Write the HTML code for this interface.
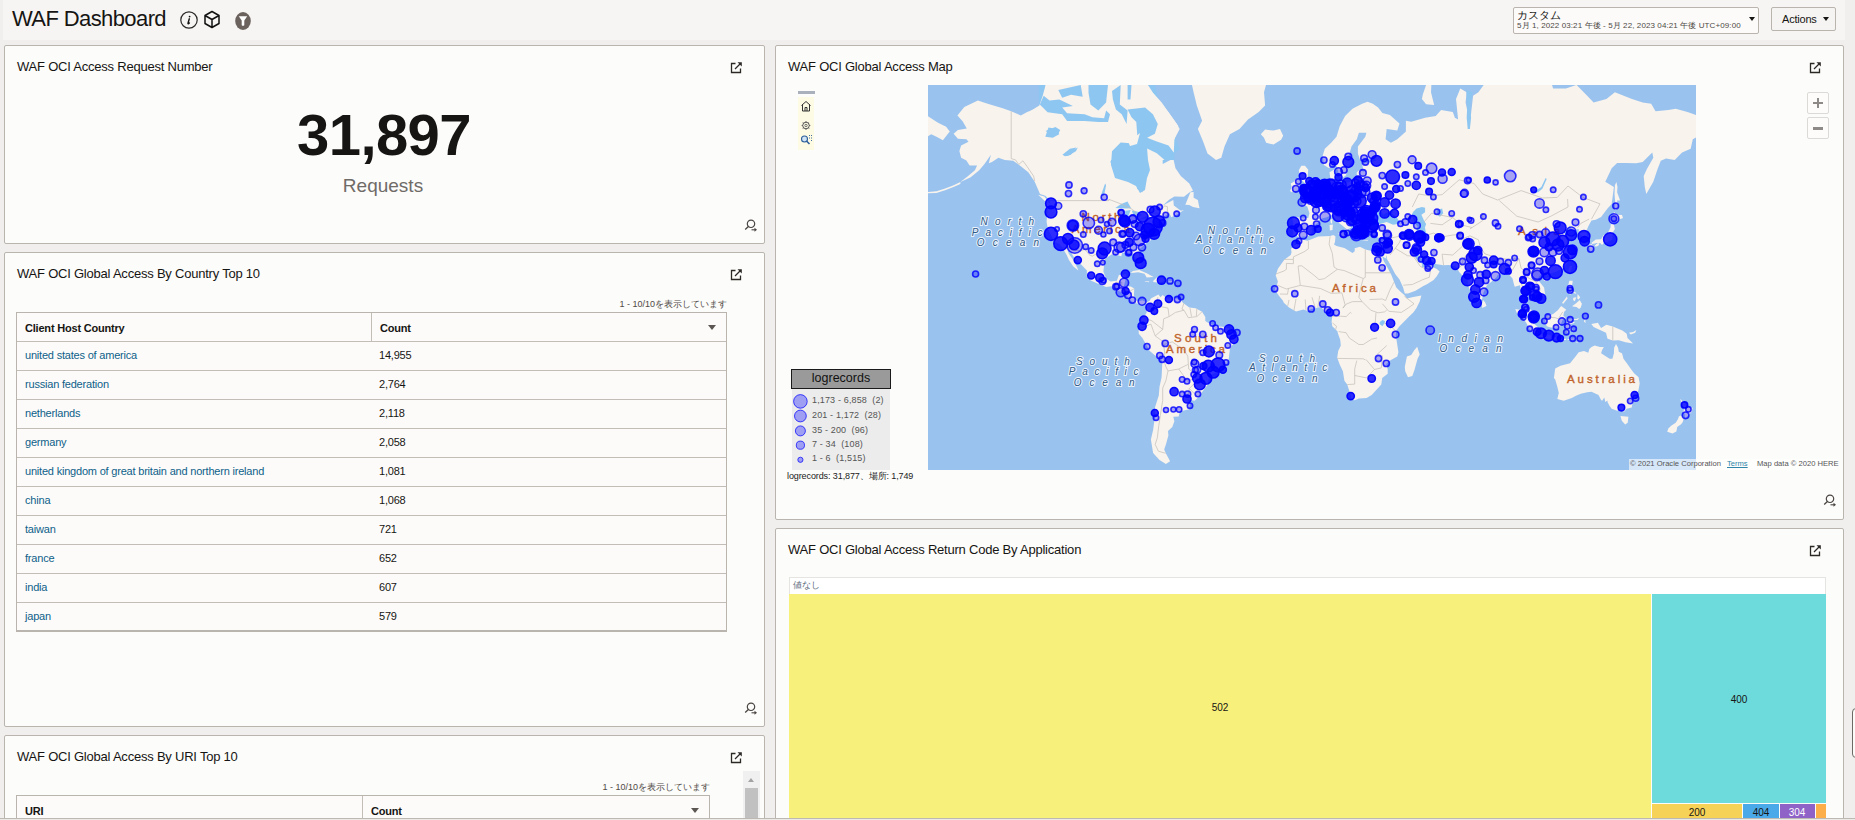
<!DOCTYPE html>
<html><head><meta charset="utf-8">
<style>
*{box-sizing:border-box;margin:0;padding:0}
html,body{width:1855px;height:820px;overflow:hidden;background:#f0efed;font-family:"Liberation Sans",sans-serif;color:#161513}
.a{position:absolute;white-space:nowrap}
.hdr{position:absolute;left:3px;top:0;width:1842px;height:40px;background:#f6f5f3}
.pnl{position:absolute;background:#fcfcfa;border:1px solid #b9b4ad;border-radius:2px}
.ttl{position:absolute;font-size:13px;letter-spacing:-0.22px;color:#161513;line-height:16px}
.ext{position:absolute;width:14px;height:14px}
.tbl{position:absolute;border:1px solid #b9b4ad;border-bottom-width:2px;background:#fcfbf9}
.row{position:absolute;left:0;right:0;height:29px;border-top:1px solid #c2bdb6}
.row span{position:absolute;top:7px;font-size:11px;letter-spacing:-0.2px;line-height:13px}
.lnk{color:#0e5f8a}
.th span{font-weight:bold;color:#161513}
.vd{position:absolute;top:0;width:1px;height:28px;background:#c2bdb6}
.tri{position:absolute;width:0;height:0;border-left:4.5px solid transparent;border-right:4.5px solid transparent;border-top:5px solid #5b5652}
</style></head><body>
<div class="hdr"></div>
<div class="a" style="left:12px;top:6px;font-size:22px;line-height:26px;letter-spacing:-0.6px;color:#161513">WAF Dashboard</div>

<svg class="a" style="left:179px;top:10px" width="20" height="20" viewBox="0 0 20 20"><circle cx="10" cy="10" r="8.2" fill="none" stroke="#2b2826" stroke-width="1.2"/><path d="M10.6 6.6v0.01" stroke="#161513" stroke-width="1.8" stroke-linecap="round"/><path d="M10.3 8.8L9 13.2Q8.8 14 9.6 13.6L10.4 13" fill="none" stroke="#161513" stroke-width="1.4" stroke-linecap="round"/></svg>
<svg class="a" style="left:203px;top:10px" width="18" height="20" viewBox="0 0 18 20"><path d="M9 1.5L16 5.5V13.5L9 17.5L2 13.5V5.5Z M2 5.5L9 9.5L16 5.5 M9 9.5V17.5" fill="none" stroke="#111" stroke-width="1.5" stroke-linejoin="round"/></svg>
<svg class="a" style="left:234px;top:11px" width="18" height="20" viewBox="0 0 18 20"><ellipse cx="9" cy="10" rx="7.8" ry="9" fill="#6b625e"/><path d="M4.8 5.2H13.2L10.3 9.5V14.2L9 15L7.7 14.2V9.5Z" fill="#fff"/></svg>
<div class="a" style="left:1513px;top:7px;width:246px;height:27px;border:1px solid #b9b4ad;border-radius:2px;background:#fcfbf9"></div>
<div class="a" style="left:1517px;top:8px;font-size:11px;line-height:14px;color:#161513">カスタム</div>
<div class="a" style="left:1517px;top:21px;font-size:8px;line-height:10px;color:#4f4a46;letter-spacing:0.1px">5月 1, 2022 03:21 午後 - 5月 22, 2023 04:21 午後 UTC+09:00</div>
<div class="a" style="left:1749px;top:17px;width:0;height:0;border-left:3.5px solid transparent;border-right:3.5px solid transparent;border-top:4.5px solid #161513"></div>
<div class="a" style="left:1771px;top:7px;width:65px;height:24px;border:1px solid #b9b4ad;border-radius:2px;background:#f5f4f2"></div>
<div class="a" style="left:1782px;top:12px;font-size:11px;line-height:14px;color:#161513;letter-spacing:-0.2px">Actions</div>
<div class="a" style="left:1823px;top:17px;width:0;height:0;border-left:3.5px solid transparent;border-right:3.5px solid transparent;border-top:4.5px solid #161513"></div>
<!-- Panel 1 -->
<div class="pnl" style="left:4px;top:45px;width:761px;height:199px"></div>
<div class="ttl" style="left:17px;top:59px">WAF OCI Access Request Number</div>
<div class="a" style="left:0;width:768px;top:100px;text-align:center;font-size:58px;font-weight:bold;line-height:70px;letter-spacing:-0.6px;color:#161513">31,897</div>
<div class="a" style="left:0;width:766px;top:174px;text-align:center;font-size:19px;line-height:24px;color:#6f6b68">Requests</div>

<!-- Panel 2 -->
<div class="pnl" style="left:4px;top:252px;width:761px;height:475px"></div>
<div class="ttl" style="left:17px;top:266px">WAF OCI Global Access By Country Top 10</div>

<div class="a" style="left:560px;width:167px;top:298px;text-align:right;font-size:9px;line-height:12px;color:#4f4a46">1 - 10/10を表示しています</div>
<div class="tbl" style="left:16px;top:312px;width:711px;height:320px">
<div class="row th" style="top:0;border-top:0;height:28px"><span style="left:8px;top:9px">Client Host Country</span><span style="left:363px;top:9px">Count</span><i class="vd" style="left:354px"></i><i class="tri" style="left:691px;top:12px"></i></div>
<div class="row" style="top:28px"><span class="lnk" style="left:8px">united states of america</span><span style="left:362px">14,955</span></div>
<div class="row" style="top:57px"><span class="lnk" style="left:8px">russian federation</span><span style="left:362px">2,764</span></div>
<div class="row" style="top:86px"><span class="lnk" style="left:8px">netherlands</span><span style="left:362px">2,118</span></div>
<div class="row" style="top:115px"><span class="lnk" style="left:8px">germany</span><span style="left:362px">2,058</span></div>
<div class="row" style="top:144px"><span class="lnk" style="left:8px">united kingdom of great britain and northern ireland</span><span style="left:362px">1,081</span></div>
<div class="row" style="top:173px"><span class="lnk" style="left:8px">china</span><span style="left:362px">1,068</span></div>
<div class="row" style="top:202px"><span class="lnk" style="left:8px">taiwan</span><span style="left:362px">721</span></div>
<div class="row" style="top:231px"><span class="lnk" style="left:8px">france</span><span style="left:362px">652</span></div>
<div class="row" style="top:260px"><span class="lnk" style="left:8px">india</span><span style="left:362px">607</span></div>
<div class="row" style="top:289px"><span class="lnk" style="left:8px">japan</span><span style="left:362px">579</span></div>
</div>
<!-- Panel 3 -->
<div class="pnl" style="left:4px;top:735px;width:761px;height:120px"></div>
<div class="ttl" style="left:17px;top:749px">WAF OCI Global Access By URI Top 10</div>
<div class="a" style="left:540px;width:170px;top:781px;text-align:right;font-size:9px;line-height:12px;color:#4f4a46">1 - 10/10を表示しています</div>
<div class="tbl" style="left:16px;top:795px;width:694px;height:40px"><div class="row th" style="top:0;border-top:0;height:28px"><span style="left:8px;top:9px">URI</span><span style="left:354px;top:9px">Count</span><i class="vd" style="left:345px"></i><i class="tri" style="left:674px;top:12px"></i></div></div>
<div class="a" style="left:743px;top:771px;width:17px;height:60px;background:#f0f0f0"></div>
<div class="a" style="left:748px;top:778px;width:0;height:0;border-left:3.5px solid transparent;border-right:3.5px solid transparent;border-bottom:4px solid #a3a3a3"></div>
<div class="a" style="left:745px;top:788px;width:13px;height:40px;background:#c1c1c1"></div>


<!-- Map panel -->
<div class="pnl" style="left:775px;top:45px;width:1069px;height:475px"></div>
<div class="ttl" style="left:788px;top:59px">WAF OCI Global Access Map</div>
<svg class="a" style="left:928px;top:85px" width="768" height="385" viewBox="0 0 768 385">
<style>.ds{fill:rgba(0,0,255,0.82);stroke:rgba(0,0,255,0.95);stroke-width:1.5}.dt{fill:rgba(0,0,255,0.33);stroke:rgba(0,0,255,0.8);stroke-width:1.6}.bl{fill:#0000ff;stroke:#0000ff;stroke-width:6;stroke-linejoin:round}
.cl{font:11.5px "Liberation Sans",sans-serif;fill:#c0622a;text-anchor:middle;stroke:#c0622a;stroke-width:0.35px}
.ol{font:italic 10px "Liberation Sans",sans-serif;fill:#2f5a88;text-anchor:middle;paint-order:stroke;stroke:#eaf2fb;stroke-width:2px}</style>
<rect width="768" height="385" fill="#99c2ef"/>
<path d="M110.9 46.6L110.9 -11.9L224.0 -11.9L230.4 14.1L243.2 41.3L251.7 63.8L221.9 91.1L217.6 112.4L179.2 112.4L179.2 46.6ZM441.6 141.3L473.6 141.3L473.6 120.5L441.6 120.5Z" fill="#8ec6f2"/>
<path d="M32.4 97.0L25.6 100.3L17.1 103.5L8.5 106.3L-1.1 107.0L-1.1 108.3L8.5 108.0L17.1 105.2L25.6 102.1L32.4 98.9ZM25.6 48.7L29.9 45.0L38.8 43.4L34.6 36.3L29.4 30.5L36.3 21.9L49.9 15.4L59.7 18.7L74.7 23.2L83.2 26.2L92.8 30.5L99.2 26.9L107.7 23.8L118.4 27.5L134.4 30.5L140.8 34.5L153.6 32.8L162.1 35.7L174.9 36.8L181.3 29.9L183.5 12.0L192.0 29.9L201.6 26.9L209.1 41.3L202.7 46.6L198.4 54.3L187.7 62.4L182.4 77.0L186.7 87.2L196.3 89.1L208.0 94.8L209.1 103.8L214.4 107.3L215.9 98.5L219.7 89.1L219.7 74.9L217.6 64.8L226.1 64.8L234.7 70.6L234.7 79.1L245.3 73.6L247.5 83.2L252.8 91.1L261.3 98.5L265.0 105.6L261.3 107.6L256.0 111.7L246.4 111.4L241.1 114.7L234.7 120.5L245.3 115.0L245.8 120.5L252.8 125.7L256.0 125.1L248.5 129.7L243.2 132.3L241.5 128.2L235.7 131.8L233.4 135.3L234.7 137.9L230.4 139.3L226.1 141.0L225.1 145.4L222.9 146.8L221.2 150.8L222.9 155.3L218.7 157.7L215.5 160.7L211.2 164.5L210.6 168.8L213.3 177.2L212.3 180.3L209.5 178.4L207.6 174.1L204.8 168.8L199.5 167.8L194.1 168.0L193.3 171.2L188.8 170.0L183.5 169.5L177.1 174.1L176.0 180.8L175.4 186.6L178.1 193.5L182.4 196.4L188.8 195.7L190.9 190.1L198.4 188.9L197.3 195.7L195.8 201.3L202.7 201.5L206.3 203.5L205.9 210.1L206.9 214.5L210.1 216.6L214.4 215.3L218.7 217.5L217.0 218.3L213.3 220.3L210.1 218.8L205.9 217.7L201.2 214.5L197.3 207.9L189.9 206.0L183.5 201.3L178.1 202.0L170.7 199.1L163.2 195.7L158.9 191.2L158.9 185.5L153.6 180.1L147.2 173.9L142.9 167.5L139.1 164.3L140.8 168.8L145.1 174.8L149.3 182.7L150.4 185.5L148.7 184.3L145.1 181.3L140.8 174.8L138.7 170.0L134.2 162.5L131.2 158.7L126.7 157.1L122.7 149.5L119.9 144.0L118.6 137.0L119.5 124.5L118.0 117.6L121.6 117.9L122.7 120.5L121.6 115.0L117.3 110.7L112.0 109.0L106.7 96.7L100.3 87.2L92.8 81.2L85.3 75.8L76.8 74.9L70.4 72.8L64.0 77.0L60.8 78.3L62.9 69.7L56.5 79.1L51.2 85.2L42.7 92.2L36.3 95.2L32.4 97.0L39.5 91.4L46.9 85.2L49.1 80.4L41.6 80.4L38.4 75.4L33.1 72.8L31.4 66.1L33.1 60.6L40.5 56.7L38.4 54.3L29.9 53.8ZM228.3 -39.5L243.2 -20.5L260.3 -16.1L265.6 7.2L268.8 20.6L274.1 35.7L269.9 44.0L275.2 56.7L279.5 68.4L288.0 74.9L293.3 72.8L296.5 61.5L301.9 49.2L311.5 44.0L320.0 34.5L330.7 26.9L337.1 20.6L336.0 7.2L341.3 -11.9L345.6 -29.6L341.3 -61.9L320.0 -105.6L266.7 -97.2L245.3 -81.8ZM246.0 67.0L243.2 61.5L245.8 55.3L251.7 44.0L248.5 38.5L241.1 28.1L234.7 20.0L226.1 12.0L215.5 4.3L204.8 -0.9L193.1 -0.1L197.3 14.1L202.7 23.8L208.0 25.6L213.3 26.9L216.5 34.5L226.1 35.7L228.3 41.3L230.4 44.0L225.1 51.8L228.3 56.7L232.5 62.4L238.9 65.2ZM131.2 14.1L139.7 1.4L155.7 -0.1L161.1 10.7L167.5 23.8L162.1 30.5L153.6 30.5L141.9 28.1L133.3 26.2L132.3 18.0ZM116.3 11.3L118.4 -3.9L136.5 -3.9L134.4 7.2L128.0 16.1L121.6 17.4ZM195.2 56.7L201.6 61.5L212.3 57.7L204.8 51.8L200.5 45.6L196.3 50.2ZM180.3 10.7L185.6 -3.9L192.0 -3.9L187.7 10.7L183.5 14.1ZM165.3 7.2L168.5 -2.4L174.9 -3.9L177.1 7.2L173.9 16.1ZM172.8 31.1L178.1 25.0L180.3 31.1L176.0 34.5ZM257.3 119.8L262.4 107.3L265.6 107.0L265.6 112.7L269.9 115.0L270.9 120.5L271.6 123.3L268.8 122.7L265.0 122.0L261.3 120.1ZM110.1 109.7L116.3 111.4L121.0 117.6L117.8 116.9L113.1 112.4ZM202.7 188.0L204.8 185.9L211.2 185.0L218.7 188.2L225.7 191.9L218.7 192.6L216.5 188.7L210.1 187.3L205.9 187.8ZM225.1 196.0L228.7 192.6L234.7 193.0L238.1 195.5L234.7 196.4L231.5 197.7L225.3 196.9ZM216.7 196.0L221.4 196.6L220.8 197.3L217.0 196.6ZM240.6 195.7L244.1 196.0L243.8 196.9L240.6 196.9ZM218.7 217.5L221.9 215.5L222.9 213.4L225.7 211.9L230.4 209.5L232.5 212.3L234.7 210.1L238.9 213.4L247.5 213.2L252.2 214.5L254.9 217.7L261.3 222.6L267.7 223.3L274.1 226.7L277.3 232.1L277.3 235.9L280.5 238.0L289.1 241.2L296.5 242.1L301.9 243.8L308.9 247.7L309.8 251.9L308.3 256.7L304.0 260.6L301.9 263.9L300.8 273.8L297.6 280.6L294.4 286.1L289.1 287.0L283.7 289.8L280.5 294.6L279.5 299.9L275.2 305.5L270.9 311.8L266.7 315.7L263.5 315.2L259.2 314.4L262.0 319.1L261.3 324.2L251.7 326.4L250.7 331.4L245.3 331.7L246.4 336.2L244.3 342.1L240.0 346.1L240.4 350.4L237.9 359.4L236.2 364.5L237.7 368.0L242.1 376.2L237.9 378.9L231.5 375.1L225.1 368.0L222.9 354.5L225.1 345.1L226.1 337.7L227.2 332.0L227.0 322.3L230.8 310.5L231.5 301.8L233.6 292.2L234.2 279.5L234.0 275.6L228.3 271.6L221.2 265.6L219.3 261.7L214.4 253.0L210.8 248.7L210.6 245.1L212.3 242.3L211.4 238.0L213.3 233.8L215.9 232.1L218.7 227.4L218.7 222.0L217.8 219.9ZM371.4 154.0L379.7 155.8L390.4 151.4L402.3 151.1L405.3 150.0L407.5 151.4L407.0 156.9L406.0 159.5L408.5 161.0L416.4 163.0L424.5 168.0L426.7 166.3L426.7 163.3L432.0 161.8L437.3 164.5L445.9 166.5L452.9 165.5L457.0 165.5L453.5 169.0L455.7 176.0L459.7 183.1L463.4 190.1L466.1 196.9L468.3 202.4L472.5 206.8L476.4 210.1L478.9 213.6L485.3 211.9L493.4 210.5L491.7 216.6L488.5 223.1L485.3 227.4L481.1 231.6L475.7 237.0L471.5 241.2L468.3 245.5L467.8 250.4L468.9 257.3L470.4 267.2L469.3 271.6L462.9 274.9L458.2 279.0L459.7 284.0L459.7 288.7L454.2 293.1L453.3 299.4L450.1 303.0L443.7 310.0L438.6 313.1L430.9 313.6L426.7 315.2L423.5 313.9L422.4 309.3L419.2 299.6L416.4 295.8L414.9 286.3L411.7 279.5L409.2 272.7L410.2 266.1L412.8 260.6L412.2 254.7L410.0 248.7L409.4 246.2L404.3 241.2L403.6 237.0L403.8 235.0L404.7 227.4L402.1 226.3L396.8 226.7L393.6 222.4L391.3 222.2L383.6 224.1L379.5 225.9L375.5 224.6L368.0 226.5L361.0 222.4L355.8 217.7L354.8 215.5L350.7 210.5L346.7 204.2L348.8 200.2L349.9 196.6L347.7 190.5L349.9 183.8L356.3 174.8L362.7 170.0L363.5 167.5L363.1 163.8L365.9 160.5L367.8 159.7L370.6 156.1ZM489.2 261.7L491.7 269.4L489.6 273.8L486.4 285.2L484.3 291.0L480.0 292.2L477.2 286.3L476.8 281.7L478.9 271.6L483.2 270.0L486.4 265.0ZM372.1 153.5L370.6 152.2L368.2 150.3L365.0 150.8L365.2 146.2L363.9 144.3L365.4 138.4L364.2 134.1L366.9 132.0L373.3 132.6L380.2 132.9L381.4 128.2L379.3 121.4L374.0 118.9L377.6 116.3L380.6 116.6L381.2 113.4L384.4 114.3L387.4 111.7L389.3 108.7L392.5 107.3L394.2 102.1L398.9 100.3L402.1 99.2L402.3 92.9L401.5 87.2L406.4 84.4L406.0 89.1L407.3 92.9L405.3 95.6L407.5 98.5L413.9 98.9L423.5 96.3L428.8 93.7L428.8 87.2L432.0 84.4L435.8 87.2L434.1 79.1L443.7 77.0L448.4 75.4L445.9 74.1L437.3 73.6L432.0 74.9L429.9 68.4L429.9 61.5L437.3 51.8L438.4 47.7L430.9 47.7L428.8 54.3L423.5 61.5L420.9 70.6L424.1 75.8L419.2 85.2L418.1 90.3L413.9 93.3L411.3 91.1L409.2 83.2L407.5 78.3L406.4 77.0L401.1 83.2L395.9 80.0L394.7 70.6L396.8 63.8L403.2 57.7L408.5 51.8L411.7 41.3L417.1 31.1L424.5 23.8L434.1 18.7L439.5 16.7L444.8 18.7L450.1 22.5L454.4 28.1L461.9 29.9L471.5 38.5L469.3 45.6L458.7 44.0L457.6 54.3L462.9 57.7L469.3 54.3L477.9 46.6L477.9 35.7L483.2 36.8L497.1 32.8L507.7 31.1L513.1 25.0L524.8 26.9L526.9 32.8L530.1 34.5L528.0 14.1L532.3 3.6L538.7 7.2L537.6 17.4L540.8 32.8L542.9 29.9L545.1 10.7L550.4 7.2L555.7 -0.1L569.6 -3.9L597.3 -29.6L622.9 -3.9L625.1 3.6L637.9 3.6L648.5 -0.1L659.2 10.7L665.6 17.4L678.4 14.1L686.9 7.2L704.0 14.1L714.7 17.4L723.2 18.7L727.5 26.2L740.3 25.0L747.7 23.8L759.5 26.9L769.1 30.5L769.1 51.8L764.8 54.3L762.7 63.8L754.1 67.5L746.7 74.9L738.1 73.6L732.8 75.8L729.6 84.0L725.3 96.7L718.3 109.0L716.8 102.1L715.7 91.1L718.9 84.0L725.3 72.8L724.3 67.5L714.7 77.0L708.3 78.3L697.6 77.9L689.1 77.9L683.7 83.2L677.3 96.7L685.9 102.1L683.7 118.9L679.5 123.6L673.1 132.0L667.7 134.7L663.5 135.6L660.3 141.3L658.1 146.8L660.1 153.5L659.2 155.6L653.9 157.4L653.9 150.8L650.7 148.7L650.7 144.0L643.2 145.4L642.1 140.4L636.8 145.4L635.1 146.8L637.9 150.3L645.3 149.8L641.1 153.5L638.5 156.6L642.1 163.8L644.1 166.5L643.2 172.4L638.9 178.4L634.7 183.6L627.6 187.1L620.8 188.9L618.7 191.2L615.5 188.5L611.2 191.2L609.7 194.6L616.1 202.4L617.2 210.1L612.3 213.4L608.0 217.1L606.9 213.4L603.7 211.2L598.4 207.0L596.3 210.1L595.6 215.5L598.4 220.9L604.6 226.3L606.3 232.9L603.7 232.7L599.5 230.1L597.8 224.1L594.1 218.8L594.1 213.4L592.6 204.6L592.0 200.2L586.7 201.8L585.6 198.0L584.5 193.5L581.3 190.1L579.8 186.6L577.1 187.8L572.8 188.2L569.6 190.1L568.5 192.3L563.2 196.9L558.9 200.2L555.3 207.9L554.2 213.8L549.3 218.6L547.2 215.5L544.0 209.0L540.8 202.4L539.3 194.6L538.9 188.9L534.4 190.5L531.2 187.1L529.7 184.3L526.9 181.3L520.5 180.1L515.2 180.3L507.7 179.1L505.6 176.0L504.1 175.6L499.2 176.8L493.9 174.1L490.7 168.8L486.4 168.8L487.5 172.9L490.7 177.2L493.9 178.4L493.9 182.0L500.3 182.7L504.1 177.7L504.5 182.0L508.8 184.1L511.6 186.6L508.8 191.2L505.6 195.1L499.4 199.1L494.9 201.3L487.5 205.7L480.0 208.4L476.8 208.6L475.1 202.4L471.5 194.6L467.2 188.9L462.9 180.8L458.7 173.6L458.7 170.0L457.6 173.6L454.4 171.2L453.3 168.8L452.9 165.5L457.6 165.0L458.7 161.3L460.4 156.1L460.8 151.4L456.5 152.7L453.3 153.2L449.1 152.2L443.7 151.6L441.6 146.8L440.5 142.6L445.9 139.8L450.1 139.6L458.7 137.0L465.1 139.8L472.5 138.4L468.7 132.3L464.0 128.8L466.1 123.6L459.7 127.3L455.5 129.7L453.3 126.7L450.1 123.3L446.9 127.6L443.5 133.5L443.7 137.0L445.7 139.6L440.5 141.0L436.3 140.1L433.1 141.5L432.0 142.6L434.1 148.1L432.0 152.2L429.9 150.8L428.8 146.8L425.4 141.3L425.6 137.6L422.4 135.3L417.1 131.2L413.2 126.7L410.2 127.3L410.7 131.2L413.9 135.6L418.6 137.3L423.5 142.4L420.3 144.0L419.2 146.8L417.5 148.1L418.6 144.0L416.0 142.1L414.3 140.4L409.6 137.0L406.0 132.6L403.2 130.0L398.9 132.3L394.7 133.2L390.4 135.6L390.8 137.6L388.7 138.7L385.1 141.3L383.4 144.0L384.4 146.2L382.5 149.2L379.7 151.6L374.6 151.6ZM-1.1 30.5L9.6 37.4L18.1 41.8L21.8 46.6L19.2 49.7L14.9 55.3L8.5 51.8L3.2 49.2L-1.1 51.8ZM371.8 112.4L377.6 110.4L387.0 108.3L387.6 103.1L384.4 100.3L381.4 96.3L379.7 91.4L380.2 84.8L377.0 80.8L373.3 80.8L370.8 85.2L372.1 93.7L374.2 95.6L377.6 98.9L374.2 101.0L374.4 104.5L372.9 106.6L377.6 107.3L374.8 109.0ZM370.8 101.0L372.1 96.7L370.1 94.1L368.0 93.7L365.9 96.7L362.7 98.5L363.7 102.1L362.0 105.9L363.7 107.3L366.5 106.3L370.3 104.9ZM332.8 49.2L337.1 44.5L345.6 45.6L352.0 44.0L355.2 50.8L353.1 54.8L345.6 59.6L338.1 57.7L336.0 52.8ZM493.9 14.1L498.1 19.3L506.2 20.0L503.0 7.2L503.5 -2.4L498.1 -0.1L494.9 9.3ZM554.2 223.1L558.5 220.9L557.2 217.5L555.1 214.9L554.0 218.8ZM663.3 157.9L667.7 154.5L673.1 154.3L675.6 150.0L679.5 148.4L682.5 142.6L682.7 139.3L685.7 138.7L686.9 144.0L684.8 147.6L684.6 151.1L684.4 154.3L682.2 156.1L681.0 155.6L680.1 156.9L676.3 157.1L674.1 160.0L672.2 157.9L668.8 157.9L664.5 158.9ZM660.9 160.0L663.5 158.9L665.6 161.3L664.5 165.3L662.6 166.3L661.5 163.3L660.5 161.3ZM666.7 160.5L669.9 157.9L671.4 158.4L670.3 160.7L667.7 161.8ZM682.7 138.4L682.7 133.2L686.1 127.0L689.1 129.7L694.0 130.0L695.0 132.9L691.2 134.4L689.5 137.0L684.8 135.6L683.7 137.9ZM686.9 125.1L690.1 123.6L689.1 115.6L692.1 115.6L689.1 107.3L689.5 102.1L688.4 97.0L686.9 100.3L686.5 109.0L687.4 118.9L686.7 123.6ZM640.2 185.5L642.1 180.8L644.1 180.8L643.2 185.5L641.7 188.0ZM615.7 194.2L619.7 192.3L620.8 193.2L618.7 196.2L615.9 195.7ZM640.0 201.3L641.3 195.7L644.7 195.7L644.3 199.1L643.2 202.4L644.3 205.7L648.5 207.9L647.5 208.8L642.1 206.2L641.1 204.6L640.0 203.5ZM644.3 220.9L647.5 218.8L651.7 214.9L653.9 218.8L652.8 222.4L651.1 223.9L648.5 222.0L644.7 221.4ZM649.6 209.0L652.2 212.3L650.7 214.5L649.2 213.4ZM645.3 212.7L648.3 212.3L646.8 216.2L645.1 214.9ZM634.0 218.1L638.9 211.6L639.6 213.4L635.3 218.8ZM640.6 206.8L643.2 207.9L642.6 209.7L641.1 209.0ZM617.2 235.9L618.7 241.2L621.9 242.3L628.3 243.6L631.5 244.0L632.5 240.2L634.7 234.8L635.7 233.8L637.9 233.3L635.3 230.6L636.2 226.7L638.3 224.8L633.2 220.9L631.5 223.1L629.8 225.2L625.1 229.1L621.2 230.6L617.8 232.1ZM587.3 223.9L592.0 224.8L597.3 230.6L605.2 238.0L610.1 242.3L609.9 248.3L606.9 248.5L601.6 244.4L598.4 238.0L594.1 232.3L588.8 228.0ZM608.4 250.4L611.8 248.7L615.5 249.8L620.8 249.8L624.4 250.9L628.3 252.6L628.1 254.5L620.8 253.5L614.4 252.6L609.1 250.9ZM629.3 253.5L631.5 253.5L637.9 253.7L637.9 255.0L631.5 255.2L629.3 254.7ZM639.6 253.9L646.4 253.5L646.4 254.5L639.6 255.0ZM648.5 256.9L654.9 253.9L653.9 255.0L648.5 258.0ZM638.9 247.7L637.9 242.3L637.4 241.2L639.6 235.9L640.0 234.2L648.5 234.0L651.1 232.7L649.6 235.0L642.1 234.8L647.0 237.8L643.2 239.1L642.1 240.2L645.3 245.5L642.1 244.4L641.1 242.3L641.1 247.7ZM656.0 232.1L658.6 233.8L657.1 235.9L658.1 237.8L656.0 237.0L656.6 233.8ZM663.3 238.9L669.9 237.8L673.1 242.9L678.4 239.7L684.8 241.4L694.4 245.5L698.7 248.7L699.5 253.0L705.1 258.4L697.6 257.3L690.8 255.2L684.8 255.6L679.5 253.7L678.0 247.7L670.9 244.4L665.6 241.9ZM700.8 247.7L705.1 247.0L708.3 244.9L707.2 247.7L702.9 249.4ZM625.9 292.9L627.2 283.6L632.5 280.8L642.1 278.3L644.7 274.9L647.5 271.6L650.7 267.2L656.0 266.1L660.3 267.8L661.3 263.9L663.5 262.1L666.7 260.6L672.0 262.1L675.8 262.1L674.1 265.0L673.1 268.3L681.6 273.8L684.4 273.8L685.9 268.3L686.1 262.8L688.0 258.9L690.1 262.8L690.8 266.7L694.0 268.3L695.5 273.8L698.7 277.9L702.9 284.0L706.1 288.2L710.6 292.2L711.7 298.6L710.4 305.5L706.6 312.9L704.0 320.4L703.8 322.6L698.7 323.7L696.1 326.7L692.3 324.2L689.1 325.8L683.7 323.7L681.6 321.0L679.5 317.0L679.5 315.4L677.3 317.0L676.3 312.6L674.1 315.7L673.1 314.9L670.5 310.0L663.5 306.8L659.2 307.3L652.8 308.8L648.5 310.5L643.8 312.9L635.7 315.7L629.3 313.9L630.8 308.0L629.3 301.8L627.2 294.6ZM692.5 331.1L700.4 331.7L699.7 337.7L697.2 339.5L693.8 335.7ZM752.2 314.1L756.3 317.8L759.3 322.3L764.8 322.8L763.5 326.9L761.2 329.2L757.3 333.4L756.5 328.6L754.8 326.9L756.7 323.7L753.1 317.0ZM752.4 330.5L755.8 332.8L754.8 337.1L753.1 339.2L749.2 342.1L748.4 346.4L744.5 348.5L739.2 346.7L740.3 343.6L743.5 340.6L747.7 337.7L749.9 334.2L750.9 331.4ZM434.1 155.3L440.1 155.3L439.5 156.1L434.3 155.6ZM410.5 147.9L417.3 147.3L416.2 151.6L410.7 149.2ZM401.5 140.1L404.9 139.6L404.5 145.1L401.9 145.4ZM402.3 134.4L404.3 134.1L404.1 138.7L402.8 138.1ZM452.9 155.8L457.8 154.3L456.3 156.4L453.3 156.9Z" fill="#f8f3ec"/>
<path d="M117.6 0.0L114.7 10.7L111.3 20.5L102.0 26.3L102.0 75.0L245.4 75.0L246.4 54.6L250.3 41.0L240.5 27.3L233.7 17.6L225.0 7.8L220.0 0.0Z" fill="#f8f3ec"/>
<path d="M111.8 19.5L115.7 10.7L121.5 15.6L131.3 14.6L144.9 21.0L134.2 22.4L139.1 28.3L156.6 29.3L164.4 32.2L176.1 33.2L178.1 25.4L182.0 29.3L180.0 37.1L170.3 37.1L156.6 36.1L139.1 36.1L134.2 29.3L119.6 27.3ZM160.5 0.0L180.0 0.0L178.1 17.6L170.3 25.4L162.5 19.5L160.5 7.8ZM130.3 4.9L152.7 0.0L154.7 11.7L143.0 9.8L134.2 12.7ZM184.0 5.9L192.7 0.0L191.8 19.5L199.6 25.4L198.6 39.0L193.7 29.3L187.9 24.4L184.9 14.6ZM199.6 0.0L203.5 0.0L202.5 14.6L199.6 14.6ZM199.6 24.4L217.1 22.4L224.9 29.3L229.8 39.0L226.9 48.8L219.1 52.7L228.8 56.6L240.5 60.5L246.4 68.3L246.4 75.0L236.6 75.0L228.8 68.3L219.1 63.4L220.0 75.0L222.0 85.0L219.0 93.0L217.0 105.0L212.0 108.0L208.0 101.0L200.0 97.0L187.0 93.0L183.0 80.0L184.0 66.3L192.7 57.6L205.4 58.5L209.3 50.7L208.3 37.1L203.5 32.2ZM117.6 45.9L127.4 42.0L132.2 44.9L130.3 48.8L123.5 51.7L121.5 48.8ZM135.2 70.2L143.0 66.3L149.8 62.4L147.9 66.3L141.0 70.2L137.1 71.2Z" fill="#8ec6f2"/>
<path d="M207.0 52.0L212.0 48.0L209.0 59.0L202.0 61.0L200.0 56.0Z" fill="#f8f3ec"/>
<path d="M538.2 5.0L539.3 20.6L538.7 32.8L539.7 44.0L541.9 44.0L543.1 32.8L541.9 20.6L544.4 7.2ZM483.6 129.7L485.3 126.7L488.5 123.6L493.9 122.0L497.1 122.7L497.1 127.3L493.4 129.7L496.0 135.6L498.1 139.0L496.9 142.6L498.1 148.1L499.2 150.0L492.8 151.4L488.5 149.5L488.1 146.8L489.6 141.8L486.4 137.0L485.3 134.1ZM508.8 125.1L514.1 123.6L515.2 128.2L512.0 131.8L508.8 129.7ZM605.4 106.6L608.0 105.6L613.3 102.1L617.6 92.9L618.7 94.1L614.4 103.8L610.1 107.3L606.5 107.6ZM134.4 69.7L141.9 63.8L148.3 62.4L142.9 69.7L138.7 71.0ZM117.3 51.8L120.5 42.4L129.1 44.0L131.2 49.2L124.8 52.8ZM172.8 110.7L177.1 98.5L178.1 100.3L176.0 110.7ZM187.3 123.0L193.1 118.9L199.5 116.6L203.1 123.3L198.4 123.6L190.9 123.3ZM196.5 137.0L197.3 125.7L202.7 125.1L199.9 132.6L199.5 137.0ZM203.7 125.4L210.1 126.7L213.8 129.7L208.2 134.1L205.9 131.2ZM206.1 137.9L215.5 134.7L212.3 135.6L208.0 138.7ZM213.8 133.2L221.4 130.6L221.2 133.2L215.0 133.5ZM451.8 237.0L454.4 235.0L457.0 235.9L456.5 238.0L454.4 241.2L451.6 239.1Z" fill="#8ec6f2"/>
<path d="M121.0 115.6L180.9 115.6L180.9 114.3L192.9 118.9L203.1 123.6L208.0 127.3L208.0 135.3L215.5 133.2L220.8 130.6L224.6 128.2L231.5 128.2L236.4 120.8L239.4 121.7L239.4 126.0L241.1 128.8M83.2 26.2L83.2 73.6L87.5 74.9L90.7 79.5L94.9 75.8L99.2 81.6L105.6 91.1L106.7 95.9M134.2 162.5L139.3 162.0L147.2 165.5L153.2 165.5L157.0 164.3L161.1 169.7L164.3 171.2L167.7 169.2L171.7 174.8L176.6 178.7M187.3 204.6L187.7 197.3L193.9 197.3L193.7 201.5M193.5 203.5L197.3 207.9L202.7 205.7L206.5 203.5M201.2 212.1L205.4 212.3M207.1 215.5L207.8 218.1M227.2 250.9L234.7 256.3L235.7 259.5L244.3 256.9L256.0 265.0L259.8 271.2L260.7 284.0L266.7 288.7L267.7 292.4L269.2 295.8L261.3 303.5L269.9 312.3M227.2 250.9L234.7 244.4L235.7 233.8L241.1 231.6L247.5 227.4L256.0 225.2L260.3 232.7L268.8 231.6L273.9 226.9M240.0 285.9L237.9 295.8L234.7 303.0L234.7 315.7L232.5 329.2L230.8 340.6L229.3 352.9L227.2 359.4L230.4 366.2L237.7 368.3M235.7 259.5L236.8 269.4L235.5 274.3L237.9 281.7L240.0 285.9L250.7 284.0L259.8 279.5M212.7 243.2L222.9 239.1L227.2 250.9M215.9 232.7L224.0 235.9L234.7 244.4M229.8 212.1L229.3 220.9L240.0 223.1L241.1 231.6M250.7 284.0L259.8 296.5L267.7 292.4M261.3 303.5L259.4 312.9M256.0 218.1L253.9 224.1L256.0 225.2M262.0 223.1L263.5 231.6M268.8 223.7L268.4 231.2M380.4 156.1L380.4 163.8L376.1 166.8L365.4 171.9L365.4 174.4L356.3 174.4M365.4 174.4L365.4 178.7L358.4 178.4L358.4 184.3L356.1 185.9L347.7 189.1M402.1 151.1L401.1 159.2L404.3 168.3L406.0 182.0L409.4 184.3M437.3 164.8L437.3 187.8L462.7 187.8M409.4 184.3L416.0 185.5L435.2 193.5L437.3 192.3L437.3 187.8M373.8 180.8L386.6 190.7L391.0 194.6L396.4 193.7L409.4 184.3M373.8 180.8L370.1 181.0L372.3 200.4L358.4 204.0L349.2 200.2M372.3 200.4L392.5 203.5L403.2 208.4L413.9 207.9L417.1 219.9L414.9 223.1M435.2 193.5L432.0 205.7L430.9 212.3L434.1 216.6M414.9 223.1L418.1 219.2L424.5 216.6L434.1 216.6L442.7 225.2L450.1 227.8L456.5 226.9L458.7 225.2M410.7 246.6L418.1 247.7L421.3 253.0L430.9 259.5L435.2 259.5L443.7 254.1L449.1 253.0M456.3 238.0L464.2 242.7L467.6 245.9M447.1 238.9L448.0 227.4M454.4 218.8L460.8 226.3L473.4 227.4L480.0 223.1L486.0 218.8L476.4 211.2M441.6 214.5L454.4 214.0L457.6 215.5L461.9 205.1L466.1 196.9M409.2 273.4L435.2 273.8L437.3 274.9M419.2 299.6L426.7 299.1L426.7 284.0L428.8 275.6M426.7 290.5L438.4 292.9L446.5 284.5M438.0 274.5L446.5 284.5L453.3 282.9L454.4 270.5M449.1 269.4L458.7 260.6M389.8 222.4L391.7 210.8M378.0 225.2L377.2 214.5M384.0 212.3L387.2 222.6M365.9 225.6L368.0 214.0M359.7 221.1L361.0 214.9M352.0 209.0L359.5 209.2L360.5 203.5M404.3 231.2L408.1 231.2L412.4 231.2L418.1 231.6L422.4 227.4L423.5 228.4M404.5 238.0L408.5 241.2L407.7 244.4M484.3 122.0L490.7 109.0L501.3 110.7L514.1 109.7L531.2 94.8L546.1 98.5L554.7 109.0L569.6 115.0M569.6 115.0L593.1 105.6L614.4 113.0L629.3 112.4L640.0 101.0L654.9 112.4L672.0 118.9L663.5 134.1M571.3 115.6L588.8 131.2L610.1 137.0L622.9 131.2L640.0 122.0L639.6 114.0M554.7 128.2L554.7 135.6L541.9 144.0M541.9 150.8L550.4 154.8L552.5 162.5L556.8 168.8L571.7 173.6L580.3 174.1L590.9 173.6M590.9 173.6L593.1 183.1L599.5 188.9L610.1 185.9L614.4 188.9M541.9 158.7L544.0 162.5L535.5 173.9L533.3 180.8L529.7 183.6M541.9 150.8L535.5 153.5L534.4 161.3L524.8 170.0L514.1 169.2L515.6 180.3M499.0 150.0L505.6 148.1L514.1 151.9L524.8 150.0L533.3 149.5M479.6 143.5L481.1 154.8L482.6 161.3L486.4 168.8M461.9 170.0L467.2 163.3L479.4 170.7L485.3 171.2L492.4 181.5L502.4 186.2L501.3 192.3L494.9 194.6L484.3 199.5L475.3 200.2M461.2 153.5L474.2 150.6L479.6 150.3M474.2 150.6L471.5 157.4L467.2 163.3M572.8 187.8L573.9 178.4L581.3 190.1M581.3 190.1L585.6 183.1L590.9 173.6M594.1 214.5L595.2 203.5L593.1 198.0L599.5 192.3M599.5 192.3L608.0 196.9L612.3 203.5L610.1 212.3L603.7 213.4M602.7 210.1L608.0 204.6L610.1 204.6M598.4 222.2L601.6 223.1M524.8 132.6L503.5 128.2L496.0 137.0M502.4 138.4L514.1 139.8L524.8 132.6L533.3 139.8L544.0 142.6M684.8 241.4L684.8 255.6M634.7 226.9L630.4 233.8L627.2 232.7L618.0 232.1M654.9 253.9L650.7 256.3M661.1 134.1L652.8 138.4L649.6 142.6M652.8 148.1L658.1 146.8" fill="none" stroke="#c2bdb6" stroke-width="0.7"/>
<text x="173.0" y="136.0" class="cl" textLength="39.0" lengthAdjust="spacing">North</text><text x="172.8" y="148.0" class="cl" textLength="58.3" lengthAdjust="spacing">America</text><text x="267.5" y="256.5" class="cl" textLength="43.0" lengthAdjust="spacing">South</text><text x="267.5" y="267.5" class="cl" textLength="59.0" lengthAdjust="spacing">America</text><text x="426.0" y="206.5" class="cl" textLength="44.0" lengthAdjust="spacing">Africa</text><text x="611.0" y="150.0" class="cl" textLength="42.0" lengthAdjust="spacing">Asia</text><text x="673.0" y="298.0" class="cl" textLength="68.0" lengthAdjust="spacing">Australia</text><text x="79.2" y="139.5" class="ol" textLength="53.6" lengthAdjust="spacing">North</text><text x="79.2" y="150.5" class="ol" textLength="70.7" lengthAdjust="spacing">Pacific</text><text x="79.9" y="160.5" class="ol" textLength="62.2" lengthAdjust="spacing">Ocean</text><text x="306.7" y="148.7" class="ol" textLength="53.7" lengthAdjust="spacing">North</text><text x="306.7" y="158.4" class="ol" textLength="78.1" lengthAdjust="spacing">Atlantic</text><text x="306.6" y="169.1" class="ol" textLength="63.4" lengthAdjust="spacing">Ocean</text><text x="174.9" y="280.4" class="ol" textLength="53.8" lengthAdjust="spacing">South</text><text x="175.7" y="290.0" class="ol" textLength="69.7" lengthAdjust="spacing">Pacific</text><text x="176.2" y="301.3" class="ol" textLength="60.9" lengthAdjust="spacing">Ocean</text><text x="359.0" y="276.5" class="ol" textLength="56.0" lengthAdjust="spacing">South</text><text x="360.2" y="286.2" class="ol" textLength="78.3" lengthAdjust="spacing">Atlantic</text><text x="359.1" y="297.4" class="ol" textLength="61.0" lengthAdjust="spacing">Ocean</text><text x="542.5" y="257.0" class="ol" textLength="65.0" lengthAdjust="spacing">Indian</text><text x="542.5" y="267.2" class="ol" textLength="62.0" lengthAdjust="spacing">Ocean</text>

<circle cx="422.4" cy="137.0" r="3.8" class="dt"/><circle cx="437.6" cy="132.1" r="3.2" class="dt"/><circle cx="438.0" cy="148.5" r="3.2" class="dt"/><circle cx="423.0" cy="128.4" r="3.8" class="ds"/><circle cx="426.0" cy="133.5" r="3.4" class="dt"/><circle cx="427.9" cy="149.5" r="4.3" class="ds"/><circle cx="428.3" cy="149.8" r="5.8" class="dt"/><circle cx="445.2" cy="127.1" r="3.2" class="ds"/><circle cx="426.4" cy="148.0" r="4.3" class="dt"/><circle cx="436.4" cy="133.0" r="4.3" class="dt"/><circle cx="434.9" cy="144.4" r="5.8" class="dt"/><circle cx="435.7" cy="142.4" r="3.4" class="ds"/><circle cx="435.3" cy="146.5" r="4.8" class="dt"/><circle cx="426.4" cy="148.7" r="3.2" class="dt"/><circle cx="437.2" cy="130.7" r="5.8" class="dt"/><circle cx="429.0" cy="145.9" r="4.3" class="ds"/><circle cx="437.9" cy="139.1" r="4.8" class="ds"/><circle cx="417.8" cy="132.4" r="4.3" class="dt"/><circle cx="426.0" cy="125.6" r="3.4" class="ds"/><circle cx="412.9" cy="116.7" r="3.2" class="dt"/><circle cx="421.4" cy="127.5" r="4.8" class="ds"/><circle cx="429.1" cy="116.2" r="3.8" class="dt"/><circle cx="428.7" cy="134.3" r="4.3" class="dt"/><circle cx="418.0" cy="117.9" r="3.4" class="dt"/><circle cx="402.3" cy="107.1" r="5.8" class="ds"/><circle cx="411.2" cy="102.4" r="4.8" class="dt"/><circle cx="385.0" cy="108.8" r="3.2" class="dt"/><circle cx="414.9" cy="104.5" r="3.8" class="ds"/><circle cx="385.2" cy="105.6" r="3.2" class="ds"/><circle cx="393.1" cy="104.4" r="3.8" class="ds"/><circle cx="424.5" cy="110.9" r="4.8" class="dt"/><circle cx="438.2" cy="126.2" r="5.8" class="ds"/><circle cx="395.2" cy="103.1" r="3.4" class="dt"/><circle cx="405.4" cy="116.3" r="4.3" class="dt"/><circle cx="390.1" cy="114.0" r="5.8" class="dt"/><circle cx="411.0" cy="101.4" r="3.8" class="dt"/><circle cx="421.6" cy="118.0" r="3.4" class="ds"/><circle cx="389.6" cy="98.1" r="3.4" class="ds"/><circle cx="445.1" cy="122.2" r="3.2" class="dt"/><circle cx="407.2" cy="108.9" r="4.8" class="dt"/><circle cx="377.3" cy="105.2" r="4.8" class="dt"/><circle cx="427.4" cy="97.2" r="3.2" class="dt"/><circle cx="391.2" cy="100.0" r="4.8" class="dt"/><circle cx="437.2" cy="132.9" r="5.8" class="dt"/><circle cx="412.4" cy="106.9" r="3.2" class="ds"/><circle cx="415.4" cy="113.7" r="3.2" class="dt"/><circle cx="403.1" cy="112.8" r="3.8" class="dt"/><circle cx="438.3" cy="100.6" r="4.3" class="dt"/><circle cx="422.8" cy="110.2" r="3.8" class="dt"/><circle cx="394.8" cy="98.8" r="3.4" class="dt"/><circle cx="375.9" cy="104.3" r="3.2" class="ds"/><circle cx="406.7" cy="112.6" r="4.3" class="dt"/><circle cx="390.3" cy="117.6" r="3.8" class="dt"/><circle cx="392.7" cy="116.9" r="4.3" class="dt"/><circle cx="420.2" cy="116.8" r="4.8" class="ds"/><circle cx="416.1" cy="128.7" r="3.2" class="dt"/><circle cx="390.4" cy="106.0" r="3.2" class="dt"/><circle cx="426.0" cy="117.9" r="4.3" class="dt"/><circle cx="435.5" cy="101.1" r="4.3" class="dt"/><circle cx="441.6" cy="129.5" r="4.8" class="ds"/><circle cx="444.2" cy="112.8" r="4.8" class="ds"/><circle cx="430.7" cy="135.2" r="5.8" class="dt"/><circle cx="396.7" cy="118.6" r="3.4" class="ds"/><circle cx="437.7" cy="102.9" r="3.8" class="ds"/><circle cx="429.6" cy="97.8" r="5.8" class="dt"/><circle cx="423.9" cy="109.5" r="4.8" class="dt"/><circle cx="418.4" cy="114.9" r="5.8" class="ds"/><circle cx="429.4" cy="101.0" r="3.4" class="ds"/><circle cx="405.6" cy="122.9" r="3.2" class="dt"/><circle cx="434.1" cy="128.3" r="4.3" class="dt"/><circle cx="409.3" cy="123.7" r="5.8" class="ds"/><circle cx="397.7" cy="115.7" r="4.8" class="dt"/><circle cx="399.9" cy="103.4" r="3.4" class="dt"/><circle cx="408.7" cy="102.1" r="4.8" class="dt"/><circle cx="410.4" cy="127.4" r="3.2" class="dt"/><circle cx="437.1" cy="127.8" r="3.4" class="ds"/><circle cx="397.0" cy="103.5" r="3.4" class="dt"/><circle cx="399.2" cy="103.5" r="4.8" class="dt"/><circle cx="427.1" cy="105.3" r="3.8" class="dt"/><circle cx="432.2" cy="107.0" r="5.8" class="dt"/><circle cx="413.3" cy="99.9" r="4.8" class="dt"/><circle cx="398.1" cy="105.4" r="5.8" class="ds"/><circle cx="409.4" cy="107.7" r="3.4" class="ds"/><circle cx="398.5" cy="110.1" r="3.2" class="ds"/><circle cx="387.1" cy="110.7" r="5.8" class="ds"/><circle cx="378.3" cy="110.1" r="3.2" class="ds"/><circle cx="419.3" cy="97.8" r="4.8" class="ds"/><circle cx="375.5" cy="102.8" r="3.4" class="ds"/><circle cx="415.9" cy="111.7" r="4.3" class="ds"/><circle cx="412.3" cy="122.0" r="5.8" class="dt"/><circle cx="400.3" cy="119.6" r="3.4" class="dt"/><circle cx="385.0" cy="106.3" r="3.4" class="dt"/><circle cx="389.0" cy="104.0" r="4.3" class="dt"/><circle cx="401.2" cy="103.8" r="3.2" class="ds"/><circle cx="437.2" cy="133.6" r="3.8" class="dt"/><circle cx="445.2" cy="116.3" r="3.4" class="dt"/><circle cx="433.0" cy="99.1" r="3.4" class="dt"/><circle cx="399.1" cy="121.7" r="4.3" class="ds"/><circle cx="437.4" cy="106.4" r="4.3" class="dt"/><circle cx="377.7" cy="105.7" r="5.8" class="dt"/><circle cx="418.7" cy="120.3" r="4.3" class="ds"/><circle cx="434.7" cy="131.5" r="3.8" class="dt"/><circle cx="382.5" cy="116.0" r="3.2" class="dt"/><circle cx="429.8" cy="106.5" r="3.2" class="ds"/><circle cx="399.6" cy="104.7" r="3.4" class="dt"/><circle cx="405.1" cy="107.8" r="4.8" class="dt"/><circle cx="416.3" cy="122.1" r="4.3" class="dt"/><circle cx="422.4" cy="110.5" r="4.8" class="dt"/><circle cx="380.9" cy="112.7" r="4.8" class="ds"/><circle cx="447.7" cy="120.1" r="4.3" class="ds"/><circle cx="377.4" cy="113.0" r="4.8" class="ds"/><circle cx="387.6" cy="97.0" r="4.3" class="ds"/><circle cx="396.6" cy="100.1" r="5.8" class="ds"/><circle cx="141.0" cy="100.0" r="3.1" class="dt"/><circle cx="140.5" cy="108.6" r="3.1" class="dt"/><circle cx="156.1" cy="105.8" r="2.9" class="dt"/><circle cx="176.2" cy="112.2" r="3.0" class="dt"/><circle cx="47.6" cy="189.0" r="3.0" class="dt"/><circle cx="123.0" cy="118.4" r="5.4" class="ds"/><circle cx="130.3" cy="120.9" r="3.4" class="dt"/><circle cx="123.0" cy="127.0" r="5.9" class="ds"/><circle cx="155.3" cy="128.8" r="3.1" class="dt"/><circle cx="193.1" cy="127.6" r="2.7" class="dt"/><circle cx="144.9" cy="140.4" r="4.9" class="ds"/><circle cx="144.9" cy="140.4" r="5.7" class="dt"/><circle cx="160.8" cy="137.9" r="5.7" class="dt"/><circle cx="173.0" cy="134.9" r="2.7" class="dt"/><circle cx="179.0" cy="139.1" r="2.5" class="dt"/><circle cx="184.0" cy="137.3" r="3.9" class="dt"/><circle cx="170.5" cy="145.2" r="3.9" class="dt"/><circle cx="181.5" cy="145.9" r="2.7" class="dt"/><circle cx="175.4" cy="149.5" r="2.5" class="dt"/><circle cx="155.3" cy="149.5" r="2.7" class="dt"/><circle cx="196.1" cy="135.5" r="5.4" class="ds"/><circle cx="204.7" cy="134.3" r="3.9" class="dt"/><circle cx="194.9" cy="148.9" r="2.7" class="dt"/><circle cx="129.0" cy="144.0" r="2.3" class="dt"/><circle cx="123.0" cy="148.9" r="6.6" class="ds"/><circle cx="132.7" cy="158.7" r="6.9" class="ds"/><circle cx="140.0" cy="153.8" r="5.4" class="ds"/><circle cx="146.1" cy="159.9" r="4.9" class="ds"/><circle cx="146.8" cy="160.5" r="7.7" class="dt"/><circle cx="157.7" cy="161.7" r="2.7" class="dt"/><circle cx="163.2" cy="165.4" r="2.7" class="dt"/><circle cx="149.8" cy="175.1" r="3.6" class="ds"/><circle cx="176.6" cy="163.5" r="6.4" class="ds"/><circle cx="174.2" cy="168.4" r="5.4" class="ds"/><circle cx="185.2" cy="157.4" r="3.3" class="dt"/><circle cx="191.3" cy="162.3" r="5.2" class="dt"/><circle cx="187.6" cy="167.2" r="2.7" class="dt"/><circle cx="197.4" cy="159.9" r="3.3" class="dt"/><circle cx="201.0" cy="167.2" r="2.7" class="dt"/><circle cx="169.3" cy="178.8" r="2.7" class="dt"/><circle cx="174.8" cy="177.6" r="2.3" class="dt"/><circle cx="163.2" cy="190.4" r="3.5" class="ds"/><circle cx="171.8" cy="192.8" r="4.1" class="ds"/><circle cx="175.4" cy="195.2" r="2.7" class="dt"/><circle cx="197.4" cy="189.1" r="4.1" class="ds"/><circle cx="196.1" cy="197.7" r="4.5" class="dt"/><circle cx="188.8" cy="201.3" r="2.7" class="dt"/><circle cx="174.4" cy="196.2" r="3.3" class="dt"/><circle cx="187.9" cy="201.7" r="3.1" class="dt"/><circle cx="192.7" cy="207.2" r="4.5" class="dt"/><circle cx="197.6" cy="206.0" r="3.5" class="ds"/><circle cx="200.0" cy="210.2" r="3.3" class="dt"/><circle cx="204.3" cy="215.1" r="3.1" class="dt"/><circle cx="214.1" cy="216.3" r="3.9" class="dt"/><circle cx="231.6" cy="122.1" r="2.7" class="dt"/><circle cx="226.8" cy="126.3" r="5.4" class="ds"/><circle cx="222.5" cy="124.5" r="3.3" class="dt"/><circle cx="237.7" cy="130.0" r="2.7" class="dt"/><circle cx="248.7" cy="128.8" r="2.7" class="dt"/><circle cx="214.6" cy="131.8" r="5.4" class="ds"/><circle cx="204.8" cy="133.7" r="3.9" class="dt"/><circle cx="196.9" cy="136.7" r="5.4" class="ds"/><circle cx="193.2" cy="127.6" r="3.1" class="dt"/><circle cx="224.9" cy="141.6" r="9.4" class="ds"/><circle cx="220.0" cy="145.2" r="6.9" class="ds"/><circle cx="231.0" cy="136.7" r="5.9" class="ds"/><circle cx="226.1" cy="148.9" r="5.4" class="ds"/><circle cx="234.7" cy="137.9" r="3.1" class="dt"/><circle cx="211.5" cy="141.6" r="4.1" class="ds"/><circle cx="206.6" cy="139.1" r="3.3" class="dt"/><circle cx="201.8" cy="147.7" r="4.1" class="ds"/><circle cx="194.4" cy="148.9" r="3.3" class="dt"/><circle cx="211.5" cy="155.0" r="5.7" class="dt"/><circle cx="201.1" cy="157.4" r="4.1" class="ds"/><circle cx="217.6" cy="153.8" r="3.5" class="ds"/><circle cx="214.0" cy="162.3" r="3.6" class="dt"/><circle cx="205.4" cy="162.3" r="3.3" class="dt"/><circle cx="193.2" cy="162.3" r="4.5" class="dt"/><circle cx="200.5" cy="167.8" r="3.1" class="dt"/><circle cx="210.3" cy="172.7" r="5.4" class="ds"/><circle cx="212.7" cy="178.2" r="5.4" class="ds"/><circle cx="216.5" cy="150.0" r="3.9" class="ds"/><circle cx="208.0" cy="151.0" r="3.7" class="dt"/><circle cx="233.5" cy="195.2" r="4.1" class="ds"/><circle cx="242.0" cy="195.9" r="3.1" class="dt"/><circle cx="249.9" cy="198.3" r="3.1" class="dt"/><circle cx="222.0" cy="222.4" r="4.1" class="ds"/><circle cx="229.9" cy="218.8" r="3.8" class="ds"/><circle cx="226.3" cy="226.1" r="3.3" class="ds"/><circle cx="240.9" cy="213.9" r="3.5" class="ds"/><circle cx="249.4" cy="214.5" r="3.1" class="dt"/><circle cx="253.1" cy="212.1" r="2.7" class="dt"/><circle cx="215.9" cy="235.2" r="4.1" class="ds"/><circle cx="214.1" cy="241.3" r="4.1" class="ds"/><circle cx="266.5" cy="244.4" r="2.9" class="dt"/><circle cx="264.7" cy="249.3" r="2.7" class="dt"/><circle cx="219.0" cy="261.5" r="3.0" class="dt"/><circle cx="237.2" cy="258.4" r="3.1" class="dt"/><circle cx="231.8" cy="270.6" r="3.1" class="dt"/><circle cx="234.2" cy="274.3" r="3.1" class="dt"/><circle cx="240.9" cy="274.9" r="3.5" class="ds"/><circle cx="274.8" cy="249.4" r="3.1" class="dt"/><circle cx="284.6" cy="238.4" r="2.7" class="dt"/><circle cx="287.6" cy="242.7" r="2.7" class="dt"/><circle cx="292.5" cy="246.3" r="2.7" class="dt"/><circle cx="301.0" cy="244.5" r="4.7" class="ds"/><circle cx="303.5" cy="249.4" r="4.7" class="ds"/><circle cx="305.9" cy="254.3" r="4.1" class="ds"/><circle cx="309.0" cy="247.6" r="3.1" class="dt"/><circle cx="299.8" cy="260.4" r="2.7" class="dt"/><circle cx="280.9" cy="266.5" r="5.4" class="ds"/><circle cx="274.8" cy="267.7" r="2.7" class="dt"/><circle cx="291.3" cy="270.1" r="3.3" class="dt"/><circle cx="290.0" cy="279.9" r="6.9" class="ds"/><circle cx="280.3" cy="281.1" r="5.9" class="ds"/><circle cx="285.2" cy="287.2" r="5.9" class="ds"/><circle cx="294.9" cy="284.8" r="3.5" class="ds"/><circle cx="298.0" cy="277.4" r="2.7" class="dt"/><circle cx="277.9" cy="293.3" r="5.9" class="ds"/><circle cx="269.3" cy="293.3" r="4.7" class="ds"/><circle cx="271.8" cy="299.4" r="5.4" class="ds"/><circle cx="266.9" cy="278.7" r="3.9" class="dt"/><circle cx="265.7" cy="289.6" r="2.7" class="dt"/><circle cx="269.3" cy="284.8" r="3.3" class="dt"/><circle cx="275.4" cy="281.1" r="3.5" class="ds"/><circle cx="254.1" cy="294.5" r="2.7" class="dt"/><circle cx="259.0" cy="296.3" r="2.7" class="dt"/><circle cx="269.9" cy="309.1" r="2.7" class="dt"/><circle cx="246.1" cy="306.7" r="4.1" class="ds"/><circle cx="254.1" cy="309.1" r="2.7" class="dt"/><circle cx="259.6" cy="309.1" r="3.1" class="dt"/><circle cx="259.0" cy="314.0" r="4.1" class="ds"/><circle cx="262.0" cy="320.7" r="2.7" class="dt"/><circle cx="226.8" cy="328.0" r="3.5" class="ds"/><circle cx="228.0" cy="332.7" r="2.7" class="dt"/><circle cx="238.0" cy="325.0" r="2.5" class="dt"/><circle cx="245.4" cy="324.5" r="2.5" class="dt"/><circle cx="251.1" cy="324.5" r="2.7" class="dt"/><circle cx="266.2" cy="277.0" r="2.7" class="dt"/><circle cx="267.4" cy="285.1" r="2.9" class="dt"/><circle cx="369.1" cy="66.0" r="3.1" class="dt"/><circle cx="395.9" cy="75.1" r="3.1" class="dt"/><circle cx="406.3" cy="75.7" r="4.1" class="ds"/><circle cx="404.4" cy="79.4" r="2.7" class="dt"/><circle cx="420.3" cy="71.5" r="3.3" class="dt"/><circle cx="420.3" cy="77.0" r="5.4" class="ds"/><circle cx="436.1" cy="73.3" r="3.3" class="dt"/><circle cx="437.4" cy="77.0" r="3.1" class="dt"/><circle cx="444.1" cy="69.6" r="3.9" class="dt"/><circle cx="448.5" cy="75.8" r="5.4" class="ds"/><circle cx="410.5" cy="86.7" r="3.9" class="dt"/><circle cx="416.0" cy="84.9" r="3.1" class="dt"/><circle cx="410.5" cy="92.2" r="3.5" class="ds"/><circle cx="434.9" cy="87.9" r="3.3" class="dt"/><circle cx="430.0" cy="95.2" r="4.1" class="ds"/><circle cx="439.2" cy="95.9" r="3.9" class="dt"/><circle cx="374.6" cy="91.0" r="3.3" class="ds"/><circle cx="370.3" cy="96.5" r="2.7" class="dt"/><circle cx="367.9" cy="103.8" r="3.3" class="dt"/><circle cx="381.3" cy="95.9" r="3.5" class="ds"/><circle cx="394.7" cy="107.4" r="10.9" class="ds"/><circle cx="378.8" cy="106.2" r="6.9" class="ds"/><circle cx="388.6" cy="116.0" r="6.4" class="ds"/><circle cx="403.2" cy="118.4" r="8.4" class="ds"/><circle cx="413.0" cy="107.4" r="6.9" class="ds"/><circle cx="425.2" cy="108.7" r="8.4" class="ds"/><circle cx="431.3" cy="116.0" r="6.9" class="ds"/><circle cx="420.3" cy="128.2" r="6.9" class="ds"/><circle cx="437.4" cy="130.6" r="8.4" class="ds"/><circle cx="410.5" cy="130.6" r="5.9" class="ds"/><circle cx="443.5" cy="140.4" r="6.9" class="ds"/><circle cx="431.3" cy="140.4" r="5.9" class="ds"/><circle cx="434.9" cy="147.7" r="5.4" class="ds"/><circle cx="448.3" cy="111.1" r="4.9" class="ds"/><circle cx="447.1" cy="122.1" r="4.9" class="ds"/><circle cx="384.0" cy="100.0" r="4.9" class="ds"/><circle cx="402.0" cy="100.0" r="5.9" class="ds"/><circle cx="417.0" cy="120.0" r="5.9" class="ds"/><circle cx="424.0" cy="135.0" r="4.9" class="ds"/><circle cx="404.4" cy="98.9" r="4.5" class="dt"/><circle cx="374.0" cy="117.2" r="3.9" class="dt"/><circle cx="388.0" cy="125.1" r="3.3" class="dt"/><circle cx="397.1" cy="131.8" r="5.2" class="dt"/><circle cx="387.4" cy="131.8" r="2.7" class="dt"/><circle cx="388.6" cy="139.1" r="3.1" class="dt"/><circle cx="389.8" cy="144.0" r="3.3" class="ds"/><circle cx="365.4" cy="137.9" r="5.9" class="ds"/><circle cx="364.2" cy="146.5" r="5.4" class="ds"/><circle cx="375.2" cy="133.0" r="2.7" class="dt"/><circle cx="376.4" cy="141.6" r="3.3" class="dt"/><circle cx="383.1" cy="145.2" r="4.7" class="ds"/><circle cx="375.2" cy="150.1" r="3.9" class="dt"/><circle cx="370.0" cy="143.0" r="3.9" class="ds"/><circle cx="415.4" cy="148.9" r="3.3" class="dt"/><circle cx="445.9" cy="148.9" r="2.7" class="dt"/><circle cx="469.4" cy="79.6" r="3.1" class="dt"/><circle cx="484.1" cy="74.8" r="3.9" class="dt"/><circle cx="490.2" cy="80.9" r="3.3" class="ds"/><circle cx="503.6" cy="83.3" r="5.2" class="dt"/><circle cx="497.5" cy="87.6" r="2.7" class="dt"/><circle cx="514.0" cy="87.6" r="3.5" class="ds"/><circle cx="514.6" cy="93.7" r="4.5" class="dt"/><circle cx="523.7" cy="87.0" r="3.5" class="ds"/><circle cx="503.0" cy="96.1" r="3.3" class="ds"/><circle cx="539.6" cy="95.5" r="3.1" class="dt"/><circle cx="464.6" cy="91.8" r="6.9" class="ds"/><circle cx="454.2" cy="90.6" r="3.1" class="dt"/><circle cx="477.4" cy="90.0" r="3.3" class="ds"/><circle cx="488.3" cy="91.8" r="2.7" class="dt"/><circle cx="479.8" cy="98.5" r="2.7" class="dt"/><circle cx="488.3" cy="100.4" r="4.1" class="ds"/><circle cx="456.6" cy="101.6" r="2.7" class="dt"/><circle cx="468.2" cy="104.0" r="3.5" class="ds"/><circle cx="472.5" cy="103.4" r="2.7" class="dt"/><circle cx="501.1" cy="106.5" r="3.3" class="ds"/><circle cx="505.4" cy="112.0" r="2.7" class="dt"/><circle cx="536.5" cy="108.3" r="3.9" class="dt"/><circle cx="448.7" cy="111.3" r="4.1" class="ds"/><circle cx="461.5" cy="110.1" r="4.1" class="ds"/><circle cx="456.6" cy="117.4" r="4.7" class="ds"/><circle cx="467.6" cy="118.7" r="4.7" class="ds"/><circle cx="446.9" cy="122.3" r="4.7" class="ds"/><circle cx="456.6" cy="128.4" r="4.7" class="ds"/><circle cx="466.4" cy="128.4" r="4.1" class="ds"/><circle cx="443.8" cy="133.3" r="5.9" class="ds"/><circle cx="445.7" cy="140.6" r="4.7" class="ds"/><circle cx="454.2" cy="143.0" r="3.1" class="dt"/><circle cx="446.3" cy="149.1" r="2.7" class="dt"/><circle cx="459.1" cy="149.1" r="3.9" class="dt"/><circle cx="454.2" cy="155.2" r="2.7" class="dt"/><circle cx="460.3" cy="157.7" r="4.1" class="ds"/><circle cx="449.3" cy="162.6" r="4.7" class="ds"/><circle cx="472.5" cy="138.8" r="2.7" class="dt"/><circle cx="477.4" cy="137.0" r="3.3" class="dt"/><circle cx="484.7" cy="134.5" r="4.1" class="ds"/><circle cx="489.0" cy="140.6" r="3.3" class="dt"/><circle cx="474.9" cy="150.4" r="3.5" class="ds"/><circle cx="481.0" cy="149.1" r="4.7" class="ds"/><circle cx="492.0" cy="151.6" r="5.9" class="ds"/><circle cx="478.6" cy="160.1" r="3.1" class="dt"/><circle cx="488.3" cy="162.6" r="3.9" class="dt"/><circle cx="510.9" cy="152.8" r="4.1" class="ds"/><circle cx="523.7" cy="128.4" r="2.7" class="dt"/><circle cx="531.0" cy="138.8" r="3.3" class="dt"/><circle cx="532.2" cy="150.4" r="3.1" class="dt"/><circle cx="539.6" cy="158.9" r="4.7" class="ds"/><circle cx="541.4" cy="134.5" r="2.2" class="dt"/><circle cx="479.8" cy="131.6" r="2.7" class="dt"/><circle cx="509.0" cy="126.7" r="2.7" class="dt"/><circle cx="415.7" cy="149.3" r="3.3" class="dt"/><circle cx="419.3" cy="148.0" r="2.7" class="dt"/><circle cx="434.0" cy="148.7" r="5.4" class="ds"/><circle cx="446.1" cy="149.3" r="3.1" class="dt"/><circle cx="459.6" cy="150.5" r="3.9" class="dt"/><circle cx="454.1" cy="155.4" r="2.7" class="dt"/><circle cx="460.2" cy="157.2" r="3.5" class="ds"/><circle cx="459.6" cy="163.3" r="4.7" class="ds"/><circle cx="458.3" cy="159.6" r="3.5" class="ds"/><circle cx="448.6" cy="165.7" r="4.7" class="ds"/><circle cx="452.2" cy="167.0" r="4.1" class="ds"/><circle cx="449.8" cy="174.9" r="3.1" class="dt"/><circle cx="454.1" cy="182.8" r="3.1" class="dt"/><circle cx="475.4" cy="151.1" r="3.1" class="dt"/><circle cx="481.5" cy="150.5" r="4.7" class="ds"/><circle cx="491.3" cy="152.3" r="5.9" class="ds"/><circle cx="492.5" cy="157.2" r="4.1" class="ds"/><circle cx="497.4" cy="152.3" r="3.3" class="ds"/><circle cx="478.5" cy="160.2" r="3.1" class="dt"/><circle cx="488.8" cy="164.5" r="4.7" class="ds"/><circle cx="486.4" cy="167.0" r="4.1" class="ds"/><circle cx="496.1" cy="169.4" r="3.5" class="ds"/><circle cx="493.1" cy="174.3" r="2.7" class="dt"/><circle cx="498.6" cy="175.5" r="4.1" class="ds"/><circle cx="503.5" cy="176.1" r="3.5" class="ds"/><circle cx="501.0" cy="180.4" r="3.9" class="dt"/><circle cx="499.8" cy="183.4" r="2.7" class="dt"/><circle cx="505.9" cy="167.6" r="3.1" class="dt"/><circle cx="510.2" cy="152.9" r="3.5" class="ds"/><circle cx="467.5" cy="217.0" r="3.1" class="dt"/><circle cx="462.6" cy="238.4" r="4.1" class="ds"/><circle cx="446.6" cy="242.3" r="3.9" class="ds"/><circle cx="467.6" cy="249.6" r="3.3" class="dt"/><circle cx="502.2" cy="245.2" r="4.2" class="dt"/><circle cx="450.5" cy="273.5" r="3.1" class="dt"/><circle cx="458.3" cy="278.4" r="3.1" class="dt"/><circle cx="443.7" cy="293.5" r="3.7" class="ds"/><circle cx="422.7" cy="311.1" r="3.7" class="ds"/><circle cx="368.0" cy="159.3" r="4.1" class="ds"/><circle cx="371.0" cy="156.0" r="2.7" class="dt"/><circle cx="346.6" cy="203.8" r="3.1" class="dt"/><circle cx="366.8" cy="208.7" r="3.1" class="dt"/><circle cx="383.2" cy="223.9" r="3.1" class="dt"/><circle cx="394.8" cy="219.0" r="3.1" class="dt"/><circle cx="399.7" cy="225.1" r="3.3" class="dt"/><circle cx="402.1" cy="227.6" r="3.5" class="ds"/><circle cx="408.2" cy="227.6" r="3.1" class="dt"/><circle cx="530.9" cy="139.3" r="3.3" class="dt"/><circle cx="543.1" cy="135.6" r="2.7" class="dt"/><circle cx="567.5" cy="138.0" r="3.1" class="dt"/><circle cx="532.1" cy="150.9" r="3.1" class="dt"/><circle cx="512.6" cy="152.7" r="3.5" class="ds"/><circle cx="540.7" cy="158.8" r="5.4" class="ds"/><circle cx="547.4" cy="169.1" r="6.6" class="ds"/><circle cx="543.7" cy="172.8" r="5.4" class="ds"/><circle cx="549.8" cy="165.5" r="4.1" class="ds"/><circle cx="534.6" cy="176.5" r="3.1" class="dt"/><circle cx="527.2" cy="180.7" r="3.8" class="ds"/><circle cx="541.3" cy="182.0" r="4.1" class="ds"/><circle cx="545.5" cy="185.6" r="2.7" class="dt"/><circle cx="539.4" cy="194.8" r="5.9" class="ds"/><circle cx="540.0" cy="189.9" r="4.1" class="ds"/><circle cx="552.2" cy="189.9" r="3.3" class="dt"/><circle cx="558.3" cy="189.3" r="4.1" class="ds"/><circle cx="557.7" cy="195.4" r="3.1" class="dt"/><circle cx="551.0" cy="197.2" r="4.7" class="ds"/><circle cx="547.4" cy="204.5" r="4.7" class="ds"/><circle cx="555.9" cy="207.0" r="3.9" class="dt"/><circle cx="546.1" cy="211.8" r="5.4" class="ds"/><circle cx="548.6" cy="217.9" r="4.7" class="ds"/><circle cx="556.5" cy="175.2" r="3.1" class="dt"/><circle cx="559.6" cy="180.1" r="2.7" class="dt"/><circle cx="565.7" cy="175.2" r="4.1" class="ds"/><circle cx="565.7" cy="179.5" r="3.3" class="ds"/><circle cx="572.4" cy="176.5" r="3.1" class="dt"/><circle cx="567.5" cy="191.1" r="4.5" class="dt"/><circle cx="576.6" cy="183.8" r="5.4" class="ds"/><circle cx="580.3" cy="177.7" r="3.1" class="dt"/><circle cx="580.3" cy="186.2" r="2.9" class="ds"/><circle cx="582.2" cy="91.1" r="5.7" class="dt"/><circle cx="559.3" cy="95.0" r="3.1" class="ds"/><circle cx="567.6" cy="97.4" r="2.5" class="dt"/><circle cx="540.8" cy="95.0" r="2.5" class="dt"/><circle cx="535.9" cy="108.7" r="3.5" class="dt"/><circle cx="605.7" cy="104.8" r="2.9" class="ds"/><circle cx="625.2" cy="104.8" r="2.7" class="dt"/><circle cx="655.4" cy="112.1" r="2.7" class="dt"/><circle cx="611.5" cy="118.4" r="4.7" class="dt"/><circle cx="617.9" cy="124.8" r="2.7" class="dt"/><circle cx="651.5" cy="124.3" r="2.7" class="dt"/><circle cx="687.7" cy="120.9" r="2.9" class="dt"/><circle cx="685.9" cy="133.7" r="4.9" class="dt"/><circle cx="685.9" cy="133.7" r="2.7" class="dt"/><circle cx="532.5" cy="138.9" r="2.7" class="dt"/><circle cx="555.4" cy="131.6" r="2.7" class="dt"/><circle cx="570.0" cy="141.3" r="2.7" class="dt"/><circle cx="591.5" cy="143.8" r="2.7" class="dt"/><circle cx="586.6" cy="173.0" r="2.7" class="dt"/><circle cx="647.5" cy="137.3" r="3.3" class="dt"/><circle cx="682.2" cy="154.4" r="6.6" class="ds"/><circle cx="656.0" cy="151.3" r="5.9" class="ds"/><circle cx="656.6" cy="156.2" r="4.7" class="ds"/><circle cx="662.7" cy="164.1" r="3.1" class="dt"/><circle cx="632.2" cy="142.8" r="5.9" class="ds"/><circle cx="628.6" cy="139.1" r="3.3" class="dt"/><circle cx="643.2" cy="146.5" r="4.5" class="dt"/><circle cx="643.2" cy="150.1" r="5.4" class="ds"/><circle cx="624.9" cy="153.8" r="6.9" class="ds"/><circle cx="616.4" cy="157.4" r="5.4" class="ds"/><circle cx="634.7" cy="156.2" r="5.9" class="ds"/><circle cx="617.6" cy="147.7" r="3.9" class="dt"/><circle cx="604.2" cy="150.1" r="3.3" class="dt"/><circle cx="600.5" cy="152.6" r="3.1" class="dt"/><circle cx="611.5" cy="149.5" r="3.1" class="dt"/><circle cx="605.4" cy="166.6" r="5.4" class="ds"/><circle cx="616.4" cy="167.2" r="4.5" class="dt"/><circle cx="624.9" cy="167.2" r="3.9" class="dt"/><circle cx="631.0" cy="166.0" r="3.3" class="dt"/><circle cx="642.0" cy="167.2" r="6.6" class="ds"/><circle cx="644.4" cy="164.8" r="4.7" class="ds"/><circle cx="622.5" cy="175.7" r="4.7" class="ds"/><circle cx="611.5" cy="176.3" r="3.3" class="dt"/><circle cx="603.6" cy="180.6" r="3.1" class="dt"/><circle cx="642.0" cy="181.8" r="6.6" class="ds"/><circle cx="627.4" cy="186.7" r="6.9" class="ds"/><circle cx="616.4" cy="185.5" r="4.1" class="ds"/><circle cx="609.1" cy="190.4" r="5.2" class="dt"/><circle cx="618.8" cy="191.6" r="3.5" class="ds"/><circle cx="598.7" cy="186.7" r="3.1" class="dt"/><circle cx="595.0" cy="194.6" r="3.1" class="dt"/><circle cx="601.8" cy="201.3" r="4.1" class="ds"/><circle cx="607.9" cy="202.6" r="3.1" class="dt"/><circle cx="642.0" cy="203.2" r="2.7" class="dt"/><circle cx="630.0" cy="160.0" r="5.9" class="ds"/><circle cx="637.0" cy="173.0" r="3.9" class="ds"/><circle cx="621.0" cy="162.0" r="3.9" class="ds"/><circle cx="601.0" cy="152.1" r="2.7" class="dt"/><circle cx="604.7" cy="153.9" r="2.7" class="dt"/><circle cx="605.9" cy="166.1" r="4.7" class="ds"/><circle cx="609.6" cy="188.7" r="5.7" class="dt"/><circle cx="598.0" cy="205.7" r="4.7" class="ds"/><circle cx="596.1" cy="214.3" r="3.5" class="ds"/><circle cx="597.4" cy="222.8" r="3.3" class="dt"/><circle cx="594.3" cy="228.9" r="4.1" class="ds"/><circle cx="605.9" cy="231.3" r="5.4" class="ds"/><circle cx="607.1" cy="210.6" r="5.4" class="ds"/><circle cx="603.5" cy="201.5" r="3.1" class="dt"/><circle cx="598.6" cy="187.4" r="3.1" class="dt"/><circle cx="594.9" cy="194.8" r="3.1" class="dt"/><circle cx="603.5" cy="180.1" r="3.1" class="dt"/><circle cx="595.4" cy="195.5" r="2.7" class="dt"/><circle cx="602.7" cy="200.9" r="3.1" class="dt"/><circle cx="597.4" cy="205.7" r="4.3" class="ds"/><circle cx="608.1" cy="204.3" r="2.7" class="dt"/><circle cx="609.1" cy="211.6" r="4.8" class="ds"/><circle cx="613.0" cy="213.5" r="4.8" class="ds"/><circle cx="604.2" cy="212.6" r="2.7" class="dt"/><circle cx="595.4" cy="214.0" r="3.8" class="ds"/><circle cx="596.9" cy="222.3" r="3.1" class="dt"/><circle cx="598.3" cy="224.3" r="2.7" class="dt"/><circle cx="594.4" cy="228.7" r="3.6" class="ds"/><circle cx="595.4" cy="232.6" r="2.5" class="dt"/><circle cx="605.7" cy="232.6" r="5.3" class="ds"/><circle cx="605.7" cy="232.6" r="3.7" class="dt"/><circle cx="619.8" cy="231.6" r="2.7" class="dt"/><circle cx="616.4" cy="236.0" r="2.7" class="dt"/><circle cx="642.2" cy="205.2" r="3.0" class="dt"/><circle cx="670.5" cy="219.9" r="3.1" class="dt"/><circle cx="657.4" cy="231.1" r="2.9" class="dt"/><circle cx="634.0" cy="236.5" r="3.6" class="dt"/><circle cx="642.2" cy="234.5" r="2.9" class="dt"/><circle cx="628.1" cy="242.3" r="2.7" class="dt"/><circle cx="639.3" cy="241.3" r="2.7" class="dt"/><circle cx="645.7" cy="243.8" r="2.7" class="dt"/><circle cx="638.3" cy="247.2" r="2.7" class="dt"/><circle cx="601.8" cy="243.8" r="2.7" class="dt"/><circle cx="613.0" cy="248.2" r="5.3" class="ds"/><circle cx="620.8" cy="250.6" r="5.3" class="ds"/><circle cx="628.6" cy="252.6" r="4.3" class="ds"/><circle cx="609.1" cy="246.7" r="3.8" class="ds"/><circle cx="632.5" cy="253.5" r="2.9" class="ds"/><circle cx="644.7" cy="253.5" r="2.9" class="dt"/><circle cx="652.0" cy="253.5" r="2.9" class="dt"/><circle cx="706.6" cy="310.0" r="3.5" class="ds"/><circle cx="707.7" cy="313.3" r="3.0" class="dt"/><circle cx="702.2" cy="316.0" r="2.7" class="dt"/><circle cx="693.4" cy="322.6" r="3.3" class="ds"/><circle cx="756.5" cy="319.9" r="3.2" class="ds"/><circle cx="760.4" cy="324.3" r="2.7" class="dt"/><circle cx="757.6" cy="330.3" r="3.3" class="dt"/>
</svg><div class="a" style="left:1629px;top:459px;width:208px;height:11px;background:rgba(255,255,255,0.6)"></div>
<div class="a" style="left:1630px;top:459px;font-size:7.6px;line-height:10px;color:#555;letter-spacing:0px">© 2021 Oracle Corporation</div>
<div class="a" style="left:1727px;top:459px;font-size:7.6px;line-height:10px;color:#2f86a8;text-decoration:underline">Terms</div>
<div class="a" style="left:1757px;top:459px;font-size:7.6px;line-height:10px;color:#555;letter-spacing:0px">Map data © 2020 HERE</div>
<div class="a" style="left:798px;top:91px;width:17px;height:3px;background:#aab0bc"></div>
<div class="a" style="left:798px;top:97px;width:16px;height:53px;background:#fdfbe3"></div>
<svg class="a" style="left:799px;top:99px" width="14" height="50" viewBox="0 0 14 50">
<path d="M2.5 6.5L7 2.5L11.5 6.5M3.5 5.5V12H10.5V5.5M6 12V8.5H8V12" fill="none" stroke="#333" stroke-width="1"/>
<circle cx="7" cy="26.5" r="3.3" fill="none" stroke="#555" stroke-width="1"/><circle cx="7" cy="26.5" r="1.2" fill="none" stroke="#555" stroke-width="0.8"/>
<path d="M7 22.2V23.2M7 29.8V30.8M2.7 26.5H3.7M10.3 26.5H11.3M4 23.5L4.7 24.2M9.3 28.8L10 29.5M10 23.5L9.3 24.2M4.7 28.8L4 29.5" stroke="#555" stroke-width="1"/>
<circle cx="5.5" cy="40" r="3" fill="#cfe3f7" stroke="#2d5f9a" stroke-width="1.1"/><path d="M7.5 42L10.5 45" stroke="#2d5f9a" stroke-width="1.6"/>
<path d="M10 36.5h1M12 36.5h1M10 39h1M12 39h1M12 41.5h1" stroke="#2d5f9a" stroke-width="0.9"/>
</svg>
<div class="a" style="left:1807px;top:92px;width:22px;height:22px;border:1px solid #dcdad6;border-radius:2px;background:#fdfcfa"></div>
<div class="a" style="left:1807px;top:117px;width:22px;height:22px;border:1px solid #dcdad6;border-radius:2px;background:#fdfcfa"></div>
<div class="a" style="left:1813px;top:102px;width:10px;height:2px;background:#8d8a87"></div>
<div class="a" style="left:1817px;top:98px;width:2px;height:10px;background:#8d8a87"></div>
<div class="a" style="left:1813px;top:127px;width:10px;height:2.5px;background:#8d8a87"></div>
<div class="a" style="left:791px;top:369px;width:100px;height:20px;background:#9a9a9a;border:1.5px solid #1a1a1a"></div>
<div class="a" style="left:791px;top:371px;width:100px;text-align:center;font-size:12.5px;line-height:15px;color:#111">logrecords</div>
<div class="a" style="left:792px;top:389px;width:98px;height:81px;background:#ececec"></div>
<svg class="a" style="left:792px;top:389px" width="98" height="81" viewBox="0 0 98 81">
<circle cx="8.4" cy="12.4" r="6.8" fill="rgba(0,0,255,0.33)" stroke="rgba(0,0,255,0.7)" stroke-width="1"/>
<circle cx="8.4" cy="27" r="5.9" fill="rgba(0,0,255,0.33)" stroke="rgba(0,0,255,0.7)" stroke-width="1"/>
<circle cx="8.4" cy="41.9" r="5" fill="rgba(0,0,255,0.33)" stroke="rgba(0,0,255,0.7)" stroke-width="1"/>
<circle cx="8.4" cy="56.2" r="4.1" fill="rgba(0,0,255,0.33)" stroke="rgba(0,0,255,0.7)" stroke-width="1"/>
<circle cx="8.4" cy="70.8" r="2.6" fill="rgba(0,0,255,0.33)" stroke="rgba(0,0,255,0.7)" stroke-width="1"/>
</svg>
<div class="a" style="left:812px;top:395px;font-size:9px;line-height:11px;color:#555;letter-spacing:0.15px">1,173 - 6,858&nbsp; (2)</div>
<div class="a" style="left:812px;top:410px;font-size:9px;line-height:11px;color:#555;letter-spacing:0.15px">201 - 1,172&nbsp; (28)</div>
<div class="a" style="left:812px;top:425px;font-size:9px;line-height:11px;color:#555;letter-spacing:0.15px">35 - 200&nbsp; (96)</div>
<div class="a" style="left:812px;top:439px;font-size:9px;line-height:11px;color:#555;letter-spacing:0.15px">7 - 34&nbsp; (108)</div>
<div class="a" style="left:812px;top:453px;font-size:9px;line-height:11px;color:#555;letter-spacing:0.15px">1 - 6&nbsp; (1,515)</div>
<div class="a" style="left:787px;top:471px;font-size:9px;line-height:11px;color:#222;letter-spacing:-0.1px">logrecords: 31,877、場所: 1,749</div>


<!-- Treemap panel -->
<div class="pnl" style="left:775px;top:528px;width:1069px;height:320px"></div>
<div class="ttl" style="left:788px;top:542px">WAF OCI Global Access Return Code By Application</div>

<svg class="a" style="left:730px;top:61px" width="13" height="13" viewBox="0 0 13 13"><path d="M5.5 2.5H1.5V11.5H10.5V7.5" fill="none" stroke="#2b2826" stroke-width="1.3"/><path d="M5 8L10.5 2.5" stroke="#2b2826" stroke-width="1.2"/><path d="M7.5 1.2H11.8V5.5Z" fill="#2b2826"/></svg>
<svg class="a" style="left:744px;top:219px" width="14" height="13" viewBox="0 0 14 13"><circle cx="7" cy="4.8" r="3.7" fill="none" stroke="#4a4542" stroke-width="1.2"/><path d="M4.4 7.5L1.2 10.5" stroke="#4a4542" stroke-width="1.3"/><path d="M7.5 10.8H11" stroke="#4a4542" stroke-width="1.1"/><path d="M10.5 8.8L13 10.8L10.5 12.8Z" fill="#4a4542"/></svg>
<svg class="a" style="left:730px;top:268px" width="13" height="13" viewBox="0 0 13 13"><path d="M5.5 2.5H1.5V11.5H10.5V7.5" fill="none" stroke="#2b2826" stroke-width="1.3"/><path d="M5 8L10.5 2.5" stroke="#2b2826" stroke-width="1.2"/><path d="M7.5 1.2H11.8V5.5Z" fill="#2b2826"/></svg>
<svg class="a" style="left:744px;top:702px" width="14" height="13" viewBox="0 0 14 13"><circle cx="7" cy="4.8" r="3.7" fill="none" stroke="#4a4542" stroke-width="1.2"/><path d="M4.4 7.5L1.2 10.5" stroke="#4a4542" stroke-width="1.3"/><path d="M7.5 10.8H11" stroke="#4a4542" stroke-width="1.1"/><path d="M10.5 8.8L13 10.8L10.5 12.8Z" fill="#4a4542"/></svg>
<svg class="a" style="left:730px;top:751px" width="13" height="13" viewBox="0 0 13 13"><path d="M5.5 2.5H1.5V11.5H10.5V7.5" fill="none" stroke="#2b2826" stroke-width="1.3"/><path d="M5 8L10.5 2.5" stroke="#2b2826" stroke-width="1.2"/><path d="M7.5 1.2H11.8V5.5Z" fill="#2b2826"/></svg>
<svg class="a" style="left:1809px;top:61px" width="13" height="13" viewBox="0 0 13 13"><path d="M5.5 2.5H1.5V11.5H10.5V7.5" fill="none" stroke="#2b2826" stroke-width="1.3"/><path d="M5 8L10.5 2.5" stroke="#2b2826" stroke-width="1.2"/><path d="M7.5 1.2H11.8V5.5Z" fill="#2b2826"/></svg>
<svg class="a" style="left:1823px;top:494px" width="14" height="13" viewBox="0 0 14 13"><circle cx="7" cy="4.8" r="3.7" fill="none" stroke="#4a4542" stroke-width="1.2"/><path d="M4.4 7.5L1.2 10.5" stroke="#4a4542" stroke-width="1.3"/><path d="M7.5 10.8H11" stroke="#4a4542" stroke-width="1.1"/><path d="M10.5 8.8L13 10.8L10.5 12.8Z" fill="#4a4542"/></svg>
<svg class="a" style="left:1809px;top:544px" width="13" height="13" viewBox="0 0 13 13"><path d="M5.5 2.5H1.5V11.5H10.5V7.5" fill="none" stroke="#2b2826" stroke-width="1.3"/><path d="M5 8L10.5 2.5" stroke="#2b2826" stroke-width="1.2"/><path d="M7.5 1.2H11.8V5.5Z" fill="#2b2826"/></svg>
<div class="a" style="left:789px;top:577px;width:1037px;height:17px;background:#fff;border:1px solid #e6e4e1;border-bottom:0"></div>
<div class="a" style="left:793px;top:579px;font-size:9px;line-height:12px;color:#5d6a7a">値なし</div>
<div class="a" style="left:789px;top:594px;width:862px;height:230px;background:#f7f07b"></div>
<div class="a" style="left:1652px;top:594px;width:174px;height:209px;background:#6ddadc"></div>
<div class="a" style="left:1652px;top:804px;width:90px;height:20px;background:#f6d257"></div>
<div class="a" style="left:1743px;top:804px;width:36px;height:20px;background:#4aa9e8"></div>
<div class="a" style="left:1780px;top:804px;width:35px;height:20px;background:#8f62c8"></div>
<div class="a" style="left:1816px;top:804px;width:10px;height:20px;background:#fcae4b"></div>
<div class="a" style="left:1200px;width:40px;top:701.5px;text-align:center;font-size:10px;line-height:12px;color:#161513">502</div>
<div class="a" style="left:1719px;width:40px;top:693.5px;text-align:center;font-size:10px;line-height:12px;color:#161513">400</div>
<div class="a" style="left:1677px;width:40px;top:806.5px;text-align:center;font-size:10px;line-height:12px;color:#161513">200</div>
<div class="a" style="left:1741px;width:40px;top:806.5px;text-align:center;font-size:10px;line-height:12px;color:#161513">404</div>
<div class="a" style="left:1777px;width:40px;top:806.5px;text-align:center;font-size:10px;line-height:12px;color:#fff">304</div>
<div class="a" style="left:1852px;top:708px;width:10px;height:50px;border:1px solid #6d6966;border-radius:4px;background:#fcfbf9"></div>
<div class="a" style="left:0;top:818px;width:1855px;height:1px;background:#bdb8b2"></div><div class="a" style="left:0;top:819px;width:1855px;height:1px;background:#eceae7"></div>
</body></html>
